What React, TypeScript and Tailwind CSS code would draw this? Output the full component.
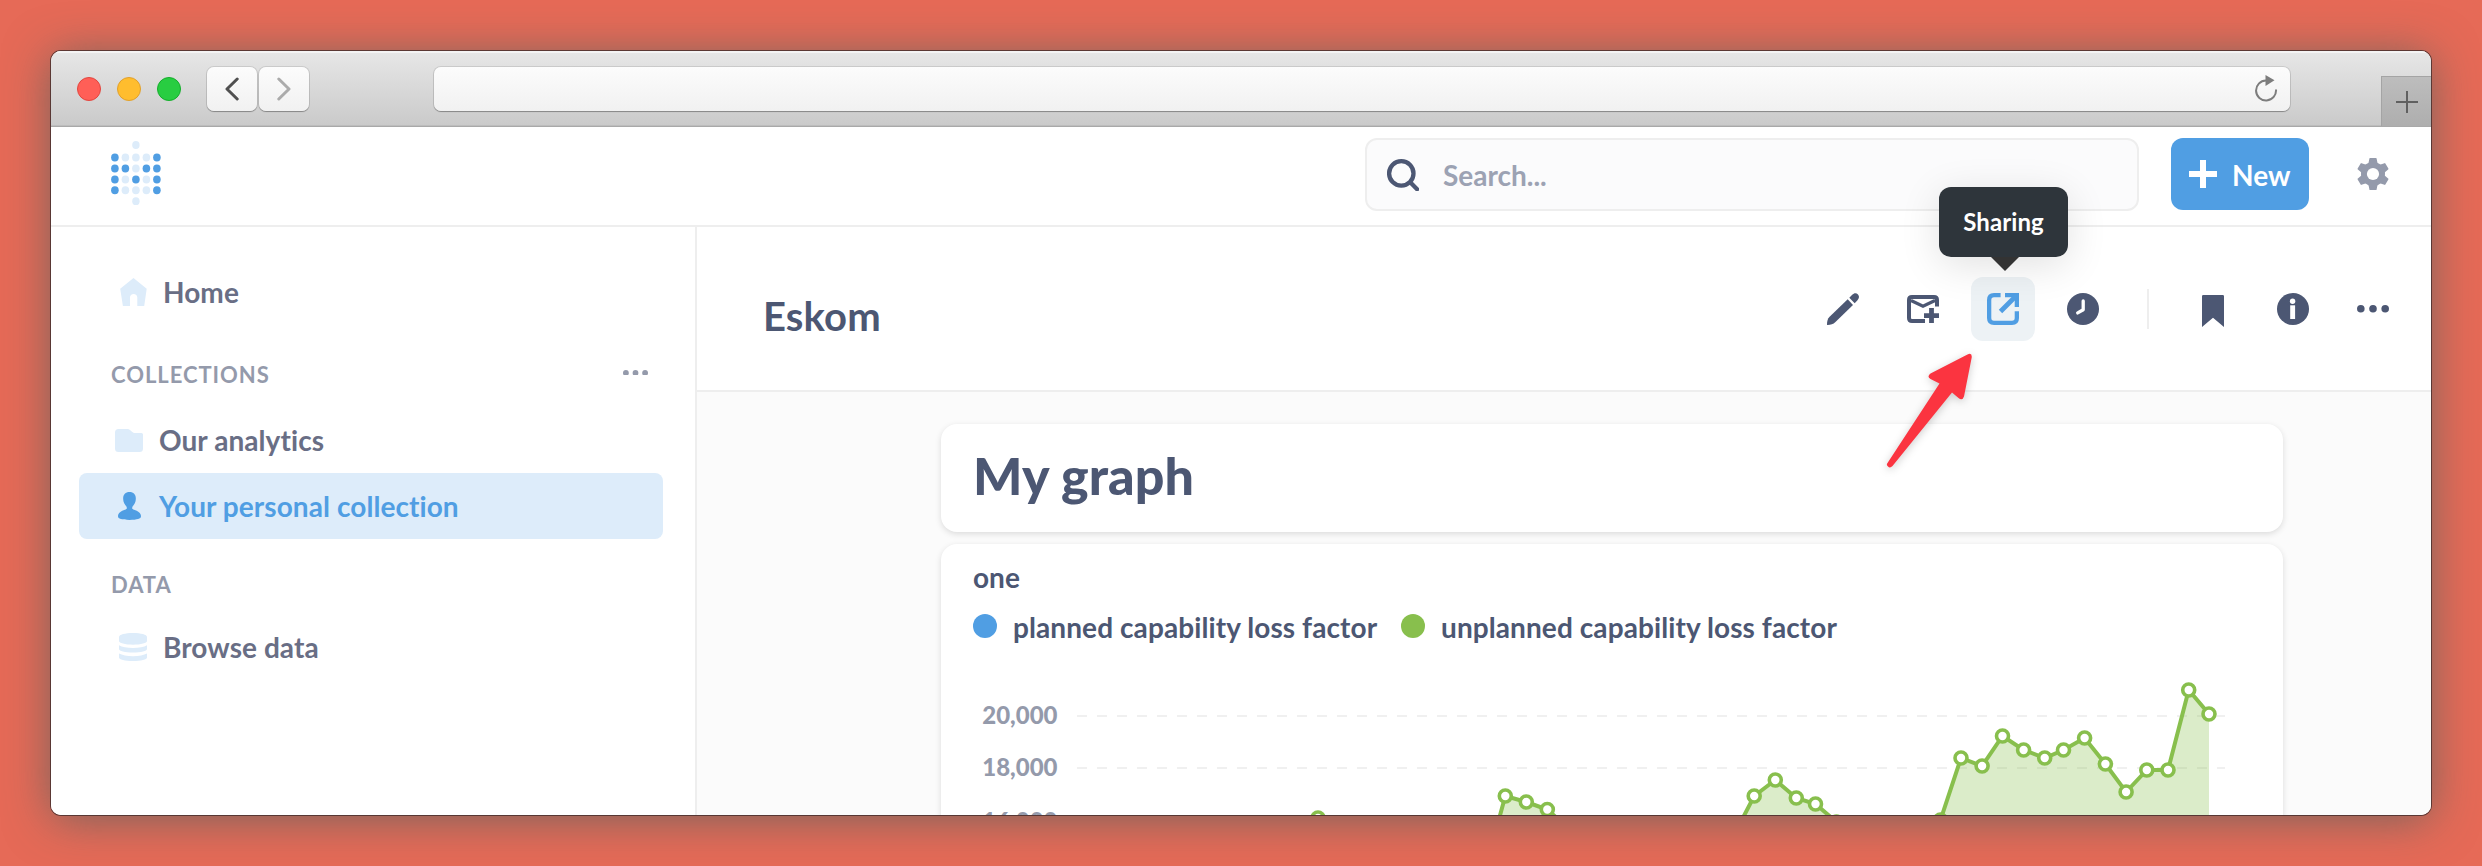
import type { ReactNode } from "react";

const NAVY = "#4c5773";
const BRAND = "#509ee3";
const GREEN = "#88bf4d";

/* ---------- icons ---------- */

function Logo() {
  const cols = [3.9, 14.4, 24.9, 35.4, 45.9];
  const rows = [16.6, 27.5, 38.4, 49.3];
  const on = ["10001", "11011", "10101", "10001"];
  return (
    <svg width="50" height="65" viewBox="0 0 50 65">
      <ellipse cx="24.9" cy="4" rx="3.7" ry="3.9" fill="#ddecfa" />
      {rows.map((y, r) =>
        cols.map((x, c) => (
          <ellipse key={`${r}-${c}`} cx={x} cy={y} rx="3.8" ry="4" fill={on[r][c] === "1" ? BRAND : "#ddecfa"} />
        ))
      )}
      <ellipse cx="24.9" cy="60.2" rx="3.7" ry="3.9" fill="#ddecfa" />
    </svg>
  );
}

function SearchIcon() {
  return (
    <svg width="32" height="32" viewBox="0 0 32 32" fill="none" stroke={NAVY}>
      <circle cx="14.3" cy="14.4" r="12.2" strokeWidth="4.3" />
      <path d="M23.5 23.6l6.6 6.6" strokeWidth="4.3" strokeLinecap="round" />
    </svg>
  );
}

function GearIcon() {
  const tooth = "M12.4 0.6q0-.6.6-.6h6q.6 0 .6.6l1 5v20.800l-1 5q0 .6-.6.6h-6q-.6 0-.6-.6l-1-5v-20.800z";
  return (
    <svg width="32" height="32" viewBox="0 0 32 32" fill="#949aab">
      <circle cx="16" cy="16" r="12" />
      <path d={tooth} />
      <path d={tooth} transform="rotate(60 16 16)" />
      <path d={tooth} transform="rotate(120 16 16)" />
      <circle cx="16" cy="16" r="6.100" fill="#fff" />
    </svg>
  );
}

function HomeIcon() {
  return (
    <svg width="27" height="28" viewBox="0 0 27 28" fill="#ddecfa">
      <path d="M13.500 0L26.700 10.800 24.200 28H17.300V19.500C17.300 17.300 15.700 16 13.600 16S10 17.300 10 19.500V28H2.900L0.200 10.800z" />
    </svg>
  );
}

function FolderIcon() {
  return (
    <svg width="28" height="23" viewBox="0 0 28 23" fill="#ddecfa">
      <path d="M3.500 0H12.500C14.500 0 15.500 1.500 17 2.800 18 3.700 18.800 4 20 4H26.500Q28 4 28 5.500V19.500Q28 23 24.500 23H3.500Q0 23 0 19.500V3.500Q0 0 3.500 0z" />
    </svg>
  );
}

function PersonIcon() {
  return (
    <svg width="23" height="28" viewBox="0 0 23.200 28" fill={BRAND}>
      <path d="M11.600 0c4 0 6.400 2.600 6.400 6.600 0 3.400-1.700 6-3.300 8-.9 1.600-.2 2.700 1.500 3.300 3.800 1.200 7 3.100 7 6.500 0 2.600-4 3.600-11.600 3.600S0 27 0 24.400c0-3.400 3.200-5.300 7-6.500 1.700-.6 2.400-1.700 1.500-3.300-1.600-2-3.300-4.600-3.300-8C5.200 2.600 7.600 0 11.600 0z" />
    </svg>
  );
}

function DatabaseIcon() {
  return (
    <svg width="28" height="28" viewBox="0 0 28 28" fill="#ddecfa">
      <path d="M0 4C0 1.600 6 0 14 0s14 1.600 14 4v4c0 2-6 3.700-14 3.700S0 10 0 8z" />
      <path d="M0 12.300c3 1.700 8 2.600 14 2.600s11-.9 14-2.600v3.700c0 2-6 3.600-14 3.600S0 18 0 16z" />
      <path d="M0 20.600c3 1.700 8 2.600 14 2.600s11-.9 14-2.600v3.800c0 2-6 3.600-14 3.600S0 26.400 0 24.400z" />
    </svg>
  );
}

function PencilIcon() {
  return (
    <svg width="32" height="32" viewBox="0 0 32 32" fill={NAVY}>
      <path d="M20.700 6.300L26 12 8.200 29.300C6.400 31 3.600 32 0.600 32Q0 32 0 31.400C0 28.500.6 25.800 2.600 23.800z" />
      <path d="M22.300 4.800L25.200 1.800C27.200-.4 29.500-.2 31 1.500 32.500 3.300 32.300 5.200 30.500 7.200L27.700 10.300z" />
    </svg>
  );
}

function SubscribeIcon() {
  return (
    <svg width="32" height="28" viewBox="0 0 32 28" fill="none" stroke={NAVY} strokeWidth="4">
      <path d="M18 26H5Q2 26 2 23V5Q2 2 5 2H27Q30 2 30 5V11.500" />
      <path d="M4 5.500L16 11.300 28 5.500" strokeWidth="3.200" />
      <path d="M17 20.700H32M24.500 13V28" strokeWidth="4.800" />
    </svg>
  );
}

function ShareIcon() {
  return (
    <svg width="32" height="32" viewBox="0 0 32 32" fill="none" stroke={BRAND} strokeWidth="4.300">
      <path d="M13.600 2.150H7Q2.150 2.150 2.150 7V25Q2.150 29.850 7 29.850H25Q29.850 29.850 29.850 25V18.300" />
      <path d="M18 2.150H29.850V14" />
      <path d="M29 3L13.500 18.500" strokeWidth="4.800" />
    </svg>
  );
}

function ClockIcon() {
  return (
    <svg width="32" height="32" viewBox="0 0 32 32">
      <circle cx="16" cy="16" r="16" fill={NAVY} />
      <path d="M16.200 8v8.700l-5.500 3.200" fill="none" stroke="#fff" strokeWidth="3.300" strokeLinecap="round" strokeLinejoin="round" />
    </svg>
  );
}

function BookmarkIcon() {
  return (
    <svg width="22" height="32" viewBox="0 0 22 32" fill={NAVY}>
      <path d="M1.200 0H20.800Q22 0 22 1.200V32L11 22.800 0 32V1.200Q0 0 1.200 0z" />
    </svg>
  );
}

function InfoIcon() {
  return (
    <svg width="32" height="32" viewBox="0 0 32 32">
      <circle cx="16" cy="16" r="16" fill={NAVY} />
      <circle cx="15.600" cy="8.200" r="2.700" fill="#fff" />
      <rect x="13.200" y="12.300" width="4.900" height="13.700" fill="#fff" />
    </svg>
  );
}

function Dots({ width, r, color }: { width: number; r: number; color: string }) {
  const h = r * 2;
  return (
    <svg width={width} height={h} viewBox={`0 0 ${width} ${h}`} fill={color}>
      <circle cx={r} cy={r} r={r} />
      <circle cx={width / 2} cy={r} r={r} />
      <circle cx={width - r} cy={r} r={r} />
    </svg>
  );
}

/* ---------- browser chrome ---------- */

function NavButton({ children }: { children: ReactNode }) {
  return (
    <div className="flex h-11 w-[50px] items-center justify-center rounded-[7px] bg-gradient-to-b from-[#fcfcfc] to-[#f1f1f1] shadow-[0_0_0_1px_rgba(0,0,0,0.1),0_1px_1px_rgba(0,0,0,0.28)]">
      {children}
    </div>
  );
}

function TitleBar() {
  return (
    <div className="flex h-[76px] shrink-0 items-center border-b border-[#a9a9a9] bg-gradient-to-b from-[#e7e7e7] to-[#cacaca] shadow-[inset_0_2px_0_#f4f4f4,inset_0_-1px_0_#bdbdbd]">
      <div className="ml-[26px] flex gap-4">
        <span className="size-6 rounded-full border border-[#e2463f] bg-[#ff5f57]" />
        <span className="size-6 rounded-full border border-[#e1a02c] bg-[#ffbd2e]" />
        <span className="size-6 rounded-full border border-[#14ae2b] bg-[#28cd41]" />
      </div>
      <div className="ml-[26px] flex gap-0.5">
        <NavButton>
          <svg width="14" height="24" viewBox="0 0 14 24" fill="none" stroke="#505050" strokeWidth="3" strokeLinecap="round" strokeLinejoin="round">
            <path d="M12.200 2L2 12l10.200 10" />
          </svg>
        </NavButton>
        <NavButton>
          <svg width="14" height="24" viewBox="0 0 14 24" fill="none" stroke="#ababab" strokeWidth="3" strokeLinecap="round" strokeLinejoin="round">
            <path d="M1.800 2L12 12 1.800 22" />
          </svg>
        </NavButton>
      </div>
      <div className="ml-[125px] flex h-11 w-[1856px] items-center justify-end rounded-[7px] bg-gradient-to-b from-[#fcfcfc] to-[#f1f1f1] pr-3 shadow-[0_0_0_1px_rgba(0,0,0,0.1),0_1px_1px_rgba(0,0,0,0.28)]">
        <svg width="23" height="27" viewBox="0 0 23 27">
          <path d="M21 14.500A10 10 0 1 1 11 5.500" fill="none" stroke="#7d7d7d" strokeWidth="2" />
          <path d="M10.500 0L19.500 5.300 10.500 11z" fill="#7d7d7d" />
        </svg>
      </div>
      <div className="ml-auto flex h-[50px] w-[50px] items-center justify-center self-end border-t border-l border-[#a4a4a4] bg-gradient-to-b from-[#bdbdbd] to-[#aeaeae]">
        <svg width="22" height="22" viewBox="0 0 22 22" stroke="#606060" strokeWidth="2">
          <path d="M11 0V22M0 11H22" />
        </svg>
      </div>
    </div>
  );
}

/* ---------- application ---------- */

function AppHeader() {
  return (
    <div className="flex h-[100px] shrink-0 items-start border-b-2 border-[#eeeeee] bg-white pt-[11px] pr-[42px] pl-[60px]">
      <div className="pt-[3px]">
        <Logo />
      </div>
      <div className="ml-auto flex h-[73px] w-[774px] items-center rounded-xl border-2 border-[#eeeeee] bg-[#fbfbfc] pl-5">
        <SearchIcon />
        <span className="ml-6 text-[28px] font-bold text-[#9ca2b3]">Search...</span>
      </div>
      <div className="ml-8 flex h-[72px] w-[138px] items-center rounded-xl bg-[#509ee3] pl-[18px] text-white">
        <svg width="28" height="28" viewBox="0 0 28 28" stroke="#fff" strokeWidth="6">
          <path d="M14 0V28M0 14H28" />
        </svg>
        <span className="ml-[15px] pt-0.5 text-[28px] font-bold">New</span>
      </div>
      <div className="ml-12 pt-5">
        <GearIcon />
      </div>
    </div>
  );
}

function SidebarRow({ icon, label, inset, active }: { icon: ReactNode; label: string; inset?: boolean; active?: boolean }) {
  return (
    <div className={`flex h-[66px] items-center rounded-lg text-[28px] font-bold tracking-[0.07px] ${inset ? "pl-10" : "pl-9"} ${active ? "bg-[#ddecfa] text-[#509ee3]" : "text-[#696e85]"}`}>
      <span className="flex w-7 justify-center">{icon}</span>
      <span className="ml-4">{label}</span>
    </div>
  );
}

function SectionLabel({ children }: { children: ReactNode }) {
  return <span className="text-[22px] font-bold tracking-[0.95px] text-[#949aab]">{children}</span>;
}

function Sidebar() {
  return (
    <div className="w-[646px] shrink-0 border-r-2 border-[#eeeeee] bg-white pt-8 pr-8 pl-7">
      <SidebarRow inset icon={<HomeIcon />} label="Home" />
      <div className="mt-[33px] mb-[17px] flex h-8 items-center justify-between pr-[15px] pl-8">
        <SectionLabel>COLLECTIONS</SectionLabel>
        <span className="pb-[3px]">
          <Dots width={25} r={2.9} color="#949aab" />
        </span>
      </div>
      <SidebarRow icon={<FolderIcon />} label="Our analytics" />
      <SidebarRow icon={<PersonIcon />} label="Your personal collection" active />
      <div className="mt-[29px] mb-3.5 flex h-8 items-center pl-8">
        <SectionLabel>DATA</SectionLabel>
      </div>
      <SidebarRow inset icon={<DatabaseIcon />} label="Browse data" />
    </div>
  );
}

function ToolButton({ children, active }: { children: ReactNode; active?: boolean }) {
  return (
    <div className={`relative flex size-16 items-center justify-center rounded-xl ${active ? "bg-[#edf2f5]" : ""}`}>
      {children}
    </div>
  );
}

function SharingTooltip() {
  return (
    <div className="absolute -top-[90px] -left-8 z-10 flex h-[70px] w-[129px] items-center justify-center rounded-xl bg-[#2e353b] text-2xl font-bold text-white shadow-[0_8px_40px_rgba(0,0,0,0.12)]">
      <span className="tracking-[0.1px]">Sharing</span>
      <svg className="absolute top-[70px] left-[52px]" width="28" height="14" viewBox="0 0 28 14" fill="#333333">
        <path d="M0 0H28L14 14z" />
      </svg>
    </div>
  );
}

function RedArrow() {
  return (
    <svg className="absolute top-[68px] -left-[91px] z-10 drop-shadow-[0_2px_4px_rgba(0,0,0,0.2)]" width="100" height="130" viewBox="0 0 100 130" fill="#fb3440">
      <path d="M87.500 9.500Q92.200 7.300 91.700 12.500L84 51.500Q82.500 56 78.500 53L72 47.500 12.500 121Q10 123.500 8 121.500T7.500 118L59.500 38.500 50.500 34Q46.500 31.500 50.500 28.500z" />
    </svg>
  );
}

function DashboardHeader() {
  return (
    <div className="flex h-[165px] shrink-0 items-start border-b-2 border-[#eeeeee] bg-white pr-[26px] pl-[66px]">
      <h1 className="pt-[69px] text-[40px] leading-10 font-bold tracking-[0.15px] text-[#4c5773]">Eskom</h1>
      <div className="ml-auto flex items-center gap-4 pt-[50px]">
        <ToolButton><PencilIcon /></ToolButton>
        <ToolButton><SubscribeIcon /></ToolButton>
        <ToolButton active>
          <ShareIcon />
          <SharingTooltip />
          <RedArrow />
        </ToolButton>
        <ToolButton><ClockIcon /></ToolButton>
        <div className="mx-4 h-10 w-0.5 bg-[#eeeeee]" />
        <ToolButton>
          <span className="pt-1"><BookmarkIcon /></span>
        </ToolButton>
        <ToolButton><InfoIcon /></ToolButton>
        <ToolButton><Dots width={32} r={3.8} color={NAVY} /></ToolButton>
      </div>
    </div>
  );
}

const segments: [number, number][][] = [
  [[1297, 860], [1318, 818], [1339, 860]],
  [[1484, 874], [1505.3, 796], [1526.3, 802], [1547.3, 809.500], [1568, 828], [1589, 860]],
  [[1733, 837], [1754.200, 796], [1775.300, 780], [1796.300, 798], [1815.500, 804], [1836.500, 822], [1857, 850]],
  [[1920, 850], [1940.500, 820], [1961, 758], [1982.100, 766], [2002.500, 736], [2023.600, 750], [2044.700, 758], [2063.500, 750], [2084.600, 738], [2105.400, 764], [2126.100, 792], [2146.800, 770], [2168, 770], [2188.700, 690], [2209, 714]],
];

function Chart() {
  return (
    <svg width="1342" height="172" viewBox="941 643 1342 172" className="block">
      {[716, 768].map((y) => (
        <line key={y} x1="1077" x2="2225" y1={y} y2={y} stroke="#f0f0f0" strokeWidth="2" strokeDasharray="10 10" />
      ))}
      <g fill="#949aab" fontSize="24" fontWeight="900" textAnchor="end">
        <text x="1057.500" y="724">20,000</text>
        <text x="1057.500" y="776">18,000</text>
        <text x="1057.500" y="830">16,000</text>
      </g>
      {segments.map((pts, i) => {
        const line = pts.map((p) => p.join(",")).join(" ");
        return (
          <g key={i}>
            <polygon points={`${pts[0][0]},900 ${line} ${pts[pts.length - 1][0]},900`} fill={GREEN} fillOpacity="0.3" />
            <polyline points={line} fill="none" stroke={GREEN} strokeWidth="4" />
            {pts.map(([x, y]) => (
              <circle key={x} cx={x} cy={y} r="6" fill="#fff" stroke={GREEN} strokeWidth="3.600" />
            ))}
          </g>
        );
      })}
    </svg>
  );
}

function Dashboard() {
  return (
    <div className="flex flex-1 flex-col gap-3 overflow-hidden bg-[#fbfbfb] pt-8 pl-[244px]">
      <div className="flex h-[108px] w-[1342px] shrink-0 items-center rounded-2xl bg-white pb-1.5 pl-8 shadow-[0_2px_6px_rgba(0,0,0,0.13)]">
        <h2 className="text-[52px] leading-none font-black tracking-[0.1px] text-[#4c5773]">My graph</h2>
      </div>
      <div className="h-[400px] w-[1342px] shrink-0 rounded-2xl bg-white pt-[19px] shadow-[0_2px_6px_rgba(0,0,0,0.13)]">
        <div className="pl-8 text-[28px] leading-7 font-bold text-[#4c5773]">one</div>
        <div className="mt-5 flex h-8 items-center pl-8 text-[28px] font-bold tracking-[0.09px] text-[#4c5773]">
          <span className="-mt-0.5 size-6 rounded-full bg-[#509ee3]" />
          <span className="ml-4 w-[364px] whitespace-nowrap">planned capability loss factor</span>
          <span className="-mt-0.5 ml-6 size-6 rounded-full bg-[#88bf4d]" />
          <span className="ml-4 whitespace-nowrap">unplanned capability loss factor</span>
        </div>
        <Chart />
      </div>
    </div>
  );
}

export default function App() {
  return (
    <div className="h-[866px] w-[2482px] overflow-hidden bg-[#e66a57] p-[51px] font-['Lato',sans-serif] [font-variant-ligatures:none]">
      <div className="h-[764px] w-[2380px] rounded-[10px] shadow-[0_0_0_1px_rgba(60,40,40,0.75),0_4px_46px_rgba(82,98,95,0.76)]">
        <div className="flex h-full w-full flex-col overflow-hidden rounded-[10px] bg-white">
          <TitleBar />
          <AppHeader />
          <div className="flex min-h-0 flex-1">
            <Sidebar />
            <div className="flex min-w-0 flex-1 flex-col">
              <DashboardHeader />
              <Dashboard />
            </div>
          </div>
        </div>
      </div>
    </div>
  );
}
